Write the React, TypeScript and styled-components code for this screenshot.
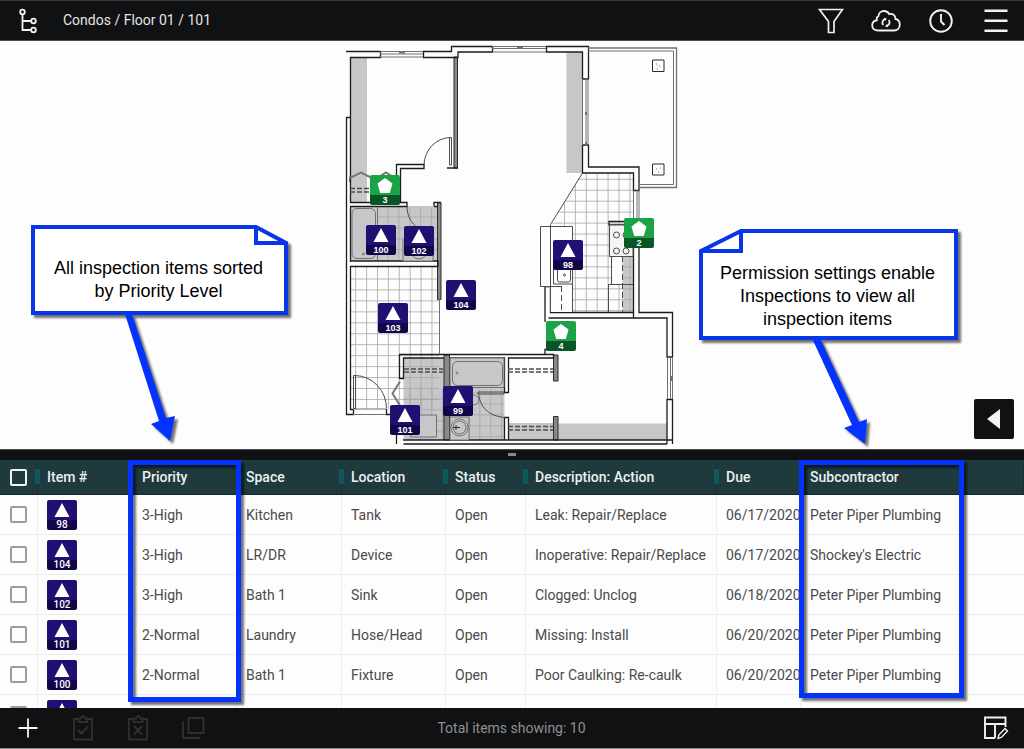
import React from "react";
import styled, { createGlobalStyle, css } from "styled-components";

const GlobalStyle = createGlobalStyle`
  *, *::before, *::after { box-sizing: border-box; }
  body { margin: 0; background: #fdfdfd; font-family: Roboto, "Liberation Sans", sans-serif; }
  button { font: inherit; }
`;

const ink = "#101113";
const annotationBlue = "#0432ff";

/* ---------- shell ---------- */

const Screen = styled.div`
  display: grid;
  grid-template-rows: auto minmax(0, 408fr) auto minmax(0, 248fr) auto;
  height: 100vh;
  background: #fdfdfd;
`;

const TopBar = styled.header`
  display: flex;
  align-items: center;
  height: 41px;
  background: ${ink};
  border-top: 1px solid #3a3a3c;
  border-bottom: 1px solid #4c4c4e;
  color: #ececee;
  padding-right: 1px;
`;

const BarButton = styled.button`
  display: flex;
  align-items: center;
  justify-content: center;
  width: 55px;
  height: 39px;
  padding: 0;
  border: 0;
  background: none;
  color: #f2f2f4;
  cursor: pointer;

  &:disabled {
    color: #2e2f31;
    cursor: default;
  }

  svg { display: block; }
`;

const Breadcrumb = styled.nav`
  flex: 1;
  padding: 0 0 2px 8px;
  font-size: 14px;
  line-height: 20px;
  color: #e4e4e6;
`;

const Crumb = styled.a`
  color: inherit;
  text-decoration: none;
`;

const BottomBar = styled.footer`
  display: grid;
  grid-template-columns: 1fr auto 1fr;
  align-items: center;
  height: 41px;
  background: ${ink};
  border-bottom: 1px solid #8c8c8c;
  padding-right: 1px;
`;

const BarGroup = styled.div<{ $end?: boolean }>`
  display: flex;
  justify-content: ${(p) => (p.$end ? "flex-end" : "flex-start")};
`;

const Total = styled.output`
  font-size: 14px;
  line-height: 20px;
  color: #8f9091;
`;

/* ---------- plan pane ---------- */

const PlanPane = styled.main`
  position: relative;
  z-index: 1;
  display: flex;
  justify-content: center;
`;

const PlanCanvas = styled.div`
  position: relative;
  width: 350px;
  height: 408px;

  > svg { display: block; }
`;

const PinSpot = styled.div<{ $x: number; $y: number }>`
  position: absolute;
  left: ${(p) => p.$x}px;
  top: ${(p) => p.$y}px;
`;

type Kind = "issue" | "done";

const TileBox = styled.span<{ $kind: Kind; $plan?: boolean }>`
  display: flex;
  flex-direction: column;
  justify-content: space-between;
  align-items: center;
  width: 30px;
  height: 30px;
  padding-top: 3px;
  border-radius: 2px;
  color: #fff;
  overflow: hidden;
  ${(p) =>
    p.$kind === "issue"
      ? css`background: linear-gradient(#210f74 0 20px, #12064a 20px);`
      : css`background: linear-gradient(#1ba345 0 20px, #0a5526 20px);`}
  font-family: ${(p) => (p.$plan ? '"Liberation Sans", sans-serif' : "Roboto, sans-serif")};
  font-weight: ${(p) => (p.$plan ? 700 : 500)};
  font-size: ${(p) => (p.$plan ? 9 : 10)}px;
  line-height: 10px;
`;

const CollapseButton = styled.button`
  position: absolute;
  right: 10px;
  bottom: 10px;
  display: flex;
  align-items: center;
  justify-content: center;
  width: 40px;
  height: 40px;
  padding: 0;
  border: 0;
  border-radius: 2px;
  background: ${ink};
`;

/* ---------- annotations ---------- */

const CalloutBox = styled.aside<{ $side: "left" | "right" }>`
  position: absolute;
  ${(p) =>
    p.$side === "left"
      ? css`left: 31px; top: 184px; width: 257px; padding: 32px 14px 12px 12px;`
      : css`right: 66px; top: 188px; width: 259px; padding: 33px 20px 9px 18px;`}
  font-family: "Liberation Sans", Arial, sans-serif;
  font-size: 18px;
  line-height: 23px;
  text-align: center;
  color: #000;

  > svg {
    position: absolute;
    left: 0;
    top: 0;
    overflow: visible;
    filter: drop-shadow(3px 3px 1px rgba(0, 0, 0, 0.55));
  }

  > p {
    position: relative;
    margin: 0;
  }
`;

const Highlight = styled.div<{ $left: number; $width: number; $height: number }>`
  position: absolute;
  z-index: 2;
  top: 0;
  left: ${(p) => p.$left}px;
  width: ${(p) => p.$width}px;
  height: ${(p) => p.$height}px;
  border: 5px solid ${annotationBlue};
  filter: drop-shadow(3px 3px 1px rgba(0, 0, 0, 0.55));
  pointer-events: none;
`;

/* ---------- splitter and table ---------- */

const Splitter = styled.div`
  display: flex;
  justify-content: center;
  height: 11px;
  padding-top: 3px;
  background: ${ink};
  border-top: 1px solid #4c4c4e;

  &::after {
    content: "";
    width: 8px;
    height: 3px;
    background: #8b8c8d;
  }
`;

const TablePane = styled.section`
  position: relative;
  overflow: hidden;
`;

const Grid = styled.table`
  width: 100%;
  table-layout: fixed;
  border-collapse: separate;
  border-spacing: 0;
  font-size: 14px;
  text-align: left;
`;

const Head = styled.th<{ $grip?: boolean }>`
  position: relative;
  height: 35px;
  padding: 0 0 0 9px;
  background: #1f3a3d;
  border-right: 1px solid #1a3033;
  border-bottom: 1px solid #17292b;
  font-weight: 500;
  line-height: 20px;
  color: #eaf1f1;

  ${(p) =>
    p.$grip &&
    css`
      &::after {
        content: "";
        position: absolute;
        z-index: 1;
        right: -3px;
        top: 9px;
        width: 5px;
        height: 15px;
        background: #0c595c;
      }
    `}
`;

const Cell = styled.td`
  height: 40px;
  padding: 0 0 0 9px;
  border-right: 1px solid #edf0ef;
  border-bottom: 1px solid #e9eeec;
  line-height: 20px;
  color: #4a4a4a;
  white-space: nowrap;
  overflow: hidden;

  &:first-child { padding-left: 10px; }
  &:last-child { border-right: 0; }
`;

const SelectHead = styled(Head)`
  padding-left: 10px;
`;

const Tick = styled.input<{ $head?: boolean }>`
  appearance: none;
  display: block;
  width: 17px;
  height: 17px;
  margin: 0;
  border: 2px solid ${(p) => (p.$head ? "#eef2f2" : "#9c9c9c")};
  border-radius: 2px;
  background: transparent;
`;

/* ---------- drawings ---------- */

const Triangle = () => (
  <svg width="16" height="14" viewBox="0 0 16 14" aria-hidden="true">
    <path d="M8 0 15.5 14H.5Z" fill="#fff" />
  </svg>
);

const Pentagon = () => (
  <svg width="16" height="15" viewBox="0 0 16 15" aria-hidden="true">
    <path d="M8 0 15.5 5.6 12.8 15H3.2L.5 5.6Z" fill="#fff" />
  </svg>
);

function Tile({ id, kind = "issue", plan }: { id: string; kind?: Kind; plan?: boolean }) {
  return (
    <TileBox $kind={kind} $plan={plan}>
      {kind === "issue" ? <Triangle /> : <Pentagon />}
      <span>{id}</span>
    </TileBox>
  );
}

const range = (from: number, to: number, step: number) => {
  const out: number[] = [];
  for (let v = from; v < to; v += step) out.push(v);
  return out;
};

function Tiles({ x1, y1, x2, y2, sx, sy }: { x1: number; y1: number; x2: number; y2: number; sx: number; sy: number }) {
  return (
    <path
      stroke="#a6a6a8"
      strokeWidth="0.8"
      d={
        range(sx, x2, 10.9).map((x) => `M${x} ${y1}V${y2}`).join("") +
        range(sy, y2, 10.95).map((y) => `M${x1} ${y}H${x2}`).join("")
      }
    />
  );
}

function FloorPlan() {
  return (
    <svg width="350" height="408" viewBox="337 41 350 408" fill="none" role="img" aria-label="Floor plan of unit 101">
      {/* shaded zones */}
      <g fill="#c6c7c9">
        <path d="M350 57H367V203H350ZM566.5 52H582V173H566.5ZM350 206H438V261H350Z" />
        <path d="M403.500 358H444V440H403.500ZM450 358H504.500V440H450ZM508 423H553V440H508ZM558 423.500H667V440H558ZM622.500 256H633V312H622.500Z" />
      </g>
      {/* tiled floors */}
      <Tiles x1={350} y1={266} x2={439} y2={409} sx={355.7} sy={279} />
      <Tiles x1={378} y1={207} x2={437} y2={261} sx={388} sy={217} />
      <Tiles x1={404} y1={389} x2={443} y2={440} sx={410} sy={399} />
      <Tiles x1={450} y1={389} x2={504} y2={440} sx={458} sy={393} />
      <clipPath id="kitchen">
        <path d="M582.500 173H633V312H572.500V226H550.500Z" />
      </clipPath>
      <g clipPath="url(#kitchen)">
        <Tiles x1={550} y1={173} x2={633} y2={312} sx={564.5} sy={179.3} />
      </g>
      {/* solid partition walls */}
      <g fill="#88898b" stroke="#2b2b2d">
        <path d="M454 57H457.500V168H454ZM437.500 202.500H441V299.500H437.500ZM444 355H449.500V440H444ZM553.500 355H558V381H553.500ZM553.500 416.500H558V440H553.500Z" />
      </g>
      {/* outer and inner wall outlines */}
      <g stroke="#1c1c1e" strokeWidth="1.300">
        <path d="M346 51.500H380.500V57.500H350.500V203M423.500 51.500H451.500V46.500H492.500V52H458V57.500H423.500ZM350 182V176.500" />
        <path d="M346 117.500H350M346.500 117V414.500H353.500V409.500M350.500 206.500V262M350.500 266V409.500H353" />
        <path d="M546.500 46.500H588.500V79H582.500V52H546.500ZM582.500 145V173H633.500V190.500H639V167H588.500V145ZM582.500 145H588" />
        <path d="M396.500 176V164.500H424V168.500H400.500V203M350 202.500H407V206.500H350M434 206V202.500H441M437.500 206.500H434M350 261H438V266.500H350" />
        <path d="M447 168H458M396.500 426V444" />
        <path d="M545 354.500H399.500V378.500H403.500V358H444M450 358H504.500V392.500H508.500V358H553.500V354.500H545V349.500H548V322" />
        <path d="M504.500 440V417.500H508.500V440M403 440H672.500M403.500 444H667" />
        <path d="M639 218V312.500H672.500V357H667V318H548.500M545 322V286.500H550.500M633.500 218V318M550.500 286V312.500H633.500M672.500 444V399.500H667V444M386.500 409V414.500H391" />
        <path d="M609 221.500H626V225H609Z" />
      </g>
      {/* windows */}
      <g stroke="#6f7072">
        <path d="M380 51.500H423M380 54H423M380 57H423M492 46.500H546M492 48.500H546M492 52H546" />
        <path d="M582.500 79V145M586 79V145M588 79V145M633.500 190V218M637 190V218M639 190V218M667.500 357V399M670.500 357V399M672.500 357V399" />
        <path d="M399 52.500H405M517 47.500H523M586 112V115M586 142V145M671 376V381" strokeWidth="2" />
        <path d="M353 409H386M353 414.500H386M439.500 299V354" />
      </g>
      {/* balcony */}
      <g stroke="#6f7072">
        <path d="M588 48H676.500V187.500H639" strokeWidth="1.300" />
        <path d="M588 51H673.500V184.500H639" />
        <path d="M652.500 60H664V71.500H652.500ZM652.500 164H664V175H652.500Z" stroke="#2b2b2d" />
        <path d="M656 64h1M659 66h1M657 69h1M656 169h1M660 168h1M658 172h1" />
      </g>
      {/* doors */}
      <g stroke="#4c4d4f">
        <path d="M449.500 137.500H451.500V165H449.500ZM424 165A27 28 0 0 1 450 137.500" />
        <path d="M407 206C407 216 411 223 418 228" />
        <path d="M353.500 375.500H355.500V408.500H353.500ZM355 375.500A32 33 0 0 1 386.500 408.500" />
        <path d="M478 392H504V394H478ZM478.500 393C480 407 488 416 505 417.500" />
        <path d="M350 178 361 172.500 371 177.500M378 177.500 386 172.500 394 177.500" strokeWidth="2" stroke="#77787a" />
        <path d="M400 381.500 392.500 393.500 400 405.500" strokeWidth="2" stroke="#77787a" />
      </g>
      {/* closet rods */}
      <path
        stroke="#4c4d4f"
        strokeDasharray="5 2"
        strokeWidth="1.300"
        d="M350 188.500H396M350 192H396M404 369H443M404 372H443M508 369H553M508 372H553M508 426.500H553M508 430H553"
      />
      {/* bath and laundry fixtures */}
      <g stroke="#6f7072" fill="#c6c7c9">
        <path d="M377.500 207V260" />
        <rect x="352" y="208.500" width="23.500" height="50" rx="5" />
        <circle cx="363.500" cy="254" r="1" />
        <path d="M450 358H504V387.500H450Z" />
        <rect x="452.500" y="361.500" width="50" height="24" rx="5" />
        <circle cx="457" cy="373" r="1" />
        <rect x="403" y="240" width="30" height="21" />
        <circle cx="419" cy="251" r="8" />
        <path d="M411 415H436.500V437H411ZM450 417H469V440H450Z" />
        <circle cx="459.500" cy="427.500" r="8.500" />
        <circle cx="459.500" cy="427.500" r="6.500" />
        <path d="M453 427.500H460M456 425V430" stroke="#2b2b2d" />
        <ellipse cx="473" cy="400" rx="6" ry="5" />
      </g>
      {/* kitchen counters, sink, stove, fridge */}
      <g stroke="#4c4d4f">
        <path d="M582.500 173 550.500 224.500V286" />
        <path d="M540.500 226.500H572.500V312H550.500V286.500H540.500Z" fill="#fdfdfd" stroke="none" />
        <path d="M572.500 312V226.500H540.500V286.500H561M550.500 226V312" />
        <path d="M553.500 242V284H572" />
        <rect x="557.500" y="262" width="13" height="20" rx="2" fill="#fdfdfd" />
        <circle cx="564.500" cy="275" r="1" />
        <path d="M561.500 286V312M622.500 256V312" strokeDasharray="6 3" />
        <path d="M609.500 225H633V256.500H609.500Z" fill="#f4f4f4" />
        <circle cx="616.500" cy="235" r="3" />
        <circle cx="626" cy="235" r="3" />
        <circle cx="616.500" cy="251" r="3" />
        <circle cx="626" cy="251" r="3" />
        <path d="M611 257V284H622V257" fill="#fdfdfd" stroke="none" />
        <path d="M611.500 256V284M608.500 312V284.500H633" />
      </g>
    </svg>
  );
}

const TreeIcon = () => (
  <svg width="22" height="28" viewBox="0 0 22 28" fill="none" stroke="currentColor" strokeWidth="1.800">
    <circle cx="5.500" cy="5" r="2.300" />
    <circle cx="16.500" cy="14" r="2.300" />
    <circle cx="16.500" cy="23" r="2.300" />
    <path d="M5.500 7.500V23H14M5.500 14H14" />
  </svg>
);

const FunnelIcon = () => (
  <svg width="26" height="26" viewBox="0 0 26 26" fill="none" stroke="currentColor" strokeWidth="1.700">
    <path d="M1.500 1.500H24.500L16 13.500V24.500H10.500V13.500Z" />
  </svg>
);

const CloudIcon = () => (
  <svg width="30" height="24" viewBox="0 0 30 24" fill="none" stroke="currentColor" strokeWidth="1.800">
    <path d="M7 21.500C3.500 21.500 1.200 19.200 1.200 16.300C1.200 13.500 3 11.600 5.800 11.300C5.300 9.200 6 7.700 7.500 7C7.600 4 10 2 13 2C15.700 2 17.300 3.200 18.200 5.200C21.300 4.200 24.600 6 24.500 10C27.300 10.600 28.800 12.800 28.800 15.600C28.800 19 26.500 21.500 23 21.500Z" />
    <path d="M12.300 16A3.600 3.600 0 0 1 14 10.200M17.700 11A3.600 3.600 0 0 1 16 16.800" strokeWidth="1.800" />
    <path d="M13 8.800 16 9.600 14 12ZM17 18.200 14 17.400 16 15Z" fill="currentColor" stroke="none" />
  </svg>
);

const ClockIcon = () => (
  <svg width="24" height="24" viewBox="0 0 24 24" fill="none" stroke="currentColor" strokeWidth="1.900">
    <circle cx="12" cy="12" r="10.800" />
    <path d="M12 5V12.500L15.500 16" />
  </svg>
);

const MenuIcon = () => (
  <svg width="24" height="24" viewBox="0 0 24 24" fill="currentColor">
    <path d="M.5.500H23.500V3H.5ZM.5 10.500H23.500V13H.5ZM.5 20.500H23.500V23H.5Z" />
  </svg>
);

const PlusIcon = () => (
  <svg width="20" height="20" viewBox="0 0 20 20" stroke="currentColor" strokeWidth="1.800">
    <path d="M10 .5V19.500M.5 10H19.500" />
  </svg>
);

const ClipboardIcon = ({ mark }: { mark: string }) => (
  <svg width="22" height="26" viewBox="0 0 22 26" fill="none" stroke="currentColor" strokeWidth="1.900">
    <path d="M7 4H2V24.500H20V4H15" />
    <path d="M6.500 7V3.500H9C9 .5 13 .5 13 3.500H15.500V7Z" />
    <path d={mark} strokeWidth="2.200" />
  </svg>
);

const CopyIcon = () => (
  <svg width="24" height="24" viewBox="0 0 24 24" fill="none" stroke="currentColor" strokeWidth="1.900">
    <path d="M7.500 2H22.500V17H7.500ZM2 5V22H19" />
  </svg>
);

const LayoutEditIcon = () => (
  <svg width="26" height="24" viewBox="0 0 26 24" fill="none" stroke="currentColor" strokeWidth="1.900">
    <path d="M12 22H2V1.500H22.500V11M2 8H22.500M12 8V22" />
    <path d="M15 22.500 15.800 19 22 12.500 24.500 15 18.300 21.500Z" strokeWidth="1.400" />
  </svg>
);

/* ---------- data ---------- */

const pins: { id: string; kind?: Kind; x: number; y: number }[] = [
  { id: "3", kind: "done", x: 33, y: 134 },
  { id: "2", kind: "done", x: 287, y: 177 },
  { id: "4", kind: "done", x: 209, y: 280 },
  { id: "100", x: 29, y: 184 },
  { id: "102", x: 67, y: 185 },
  { id: "98", x: 216, y: 199 },
  { id: "104", x: 109, y: 239 },
  { id: "103", x: 41, y: 262 },
  { id: "99", x: 106, y: 345 },
  { id: "101", x: 53, y: 364 },
];

const columns: { name: string; width?: number; grip?: boolean }[] = [
  { name: "Item #", width: 95 },
  { name: "Priority", width: 104 },
  { name: "Space", width: 105, grip: true },
  { name: "Location", width: 104, grip: true },
  { name: "Status", width: 80, grip: true },
  { name: "Description: Action", width: 191, grip: true },
  { name: "Due", width: 84 },
  { name: "Subcontractor" },
];

const rows = [
  ["98", "3-High", "Kitchen", "Tank", "Open", "Leak: Repair/Replace", "06/17/2020", "Peter Piper Plumbing"],
  ["104", "3-High", "LR/DR", "Device", "Open", "Inoperative: Repair/Replace", "06/17/2020", "Shockey's Electric"],
  ["102", "3-High", "Bath 1", "Sink", "Open", "Clogged: Unclog", "06/18/2020", "Peter Piper Plumbing"],
  ["101", "2-Normal", "Laundry", "Hose/Head", "Open", "Missing: Install", "06/20/2020", "Peter Piper Plumbing"],
  ["100", "2-Normal", "Bath 1", "Fixture", "Open", "Poor Caulking: Re-caulk", "06/20/2020", "Peter Piper Plumbing"],
  ["", "", "", "", "", "", "", ""],
];

/* ---------- page ---------- */

export default function App() {
  return (
    <>
      <GlobalStyle />
      <Screen>
        <TopBar>
          <BarButton aria-label="Locations"><TreeIcon /></BarButton>
          <Breadcrumb aria-label="Location">
            <Crumb href="#condos">Condos</Crumb> / <Crumb href="#floor">Floor 01</Crumb> / <Crumb href="#unit">101</Crumb>
          </Breadcrumb>
          <BarButton aria-label="Filter"><FunnelIcon /></BarButton>
          <BarButton aria-label="Sync"><CloudIcon /></BarButton>
          <BarButton aria-label="History"><ClockIcon /></BarButton>
          <BarButton aria-label="Menu"><MenuIcon /></BarButton>
        </TopBar>

        <PlanPane>
          <PlanCanvas>
            <FloorPlan />
            {pins.map((p) => (
              <PinSpot key={p.id} $x={p.x} $y={p.y}>
                <Tile id={p.id} kind={p.kind} plan />
              </PinSpot>
            ))}
          </PlanCanvas>
          <CollapseButton aria-label="Show panel">
            <svg width="14" height="20" viewBox="0 0 14 20" aria-hidden="true">
              <path d="M0 10 13 0V20Z" fill="#f4f4f4" />
            </svg>
          </CollapseButton>

          <CalloutBox $side="left">
            <svg width="257" height="90" viewBox="0 0 257 90" aria-hidden="true">
              <path d="M93 86 100 86 135 193 144 191 139 216 120 199 128 196Z" fill={annotationBlue} />
              <path d="M2 2H225L255 18V88H2Z" fill="#fff" stroke="#0a36ea" strokeWidth="4" />
              <path d="M225 2V18H255" fill="none" stroke="#0a36ea" strokeWidth="4" />
            </svg>
            <p>All inspection items sorted<br />by Priority Level</p>
          </CalloutBox>

          <CalloutBox $side="right">
            <svg width="259" height="111" viewBox="0 0 259 111" aria-hidden="true">
              <path d="M112 107 120 107 160 193 168 190 166 215 145 199 153 196Z" fill={annotationBlue} />
              <path d="M42 2H257V109H2V22Z" fill="#fff" stroke="#0a36ea" strokeWidth="4" />
              <path d="M42 2V22H2" fill="none" stroke="#0a36ea" strokeWidth="4" />
            </svg>
            <p>Permission settings enable<br />Inspections to view all<br />inspection items</p>
          </CalloutBox>
        </PlanPane>

        <Splitter role="separator" aria-orientation="horizontal" />

        <TablePane>
          <Grid>
            <colgroup>
              <col width={38} />
              {columns.map((c) => <col key={c.name} width={c.width} />)}
            </colgroup>
            <thead>
              <tr>
                <SelectHead scope="col" $grip><Tick type="checkbox" $head aria-label="Select all items" /></SelectHead>
                {columns.map((c) => <Head key={c.name} scope="col" $grip={c.grip}>{c.name}</Head>)}
              </tr>
            </thead>
            <tbody>
              {rows.map(([id, ...values]) => (
                <tr key={id}>
                  <Cell><Tick type="checkbox" aria-label={`Select item ${id}`} /></Cell>
                  <Cell><Tile id={id} /></Cell>
                  {values.map((v, i) => <Cell key={i}>{v}</Cell>)}
                </tr>
              ))}
            </tbody>
          </Grid>
          <Highlight $left={128} $width={113} $height={242} />
          <Highlight $left={799} $width={165} $height={238} />
        </TablePane>

        <BottomBar>
          <BarGroup>
            <BarButton aria-label="Add item"><PlusIcon /></BarButton>
            <BarButton disabled aria-label="Mark complete"><ClipboardIcon mark="M6 15 9.500 18.500 16 11.500" /></BarButton>
            <BarButton disabled aria-label="Mark rejected"><ClipboardIcon mark="M7 11 15 19.500M15 11 7 19.500" /></BarButton>
            <BarButton disabled aria-label="Duplicate"><CopyIcon /></BarButton>
          </BarGroup>
          <Total>Total items showing: 10</Total>
          <BarGroup $end>
            <BarButton aria-label="Edit layout"><LayoutEditIcon /></BarButton>
          </BarGroup>
        </BottomBar>
      </Screen>
    </>
  );
}
